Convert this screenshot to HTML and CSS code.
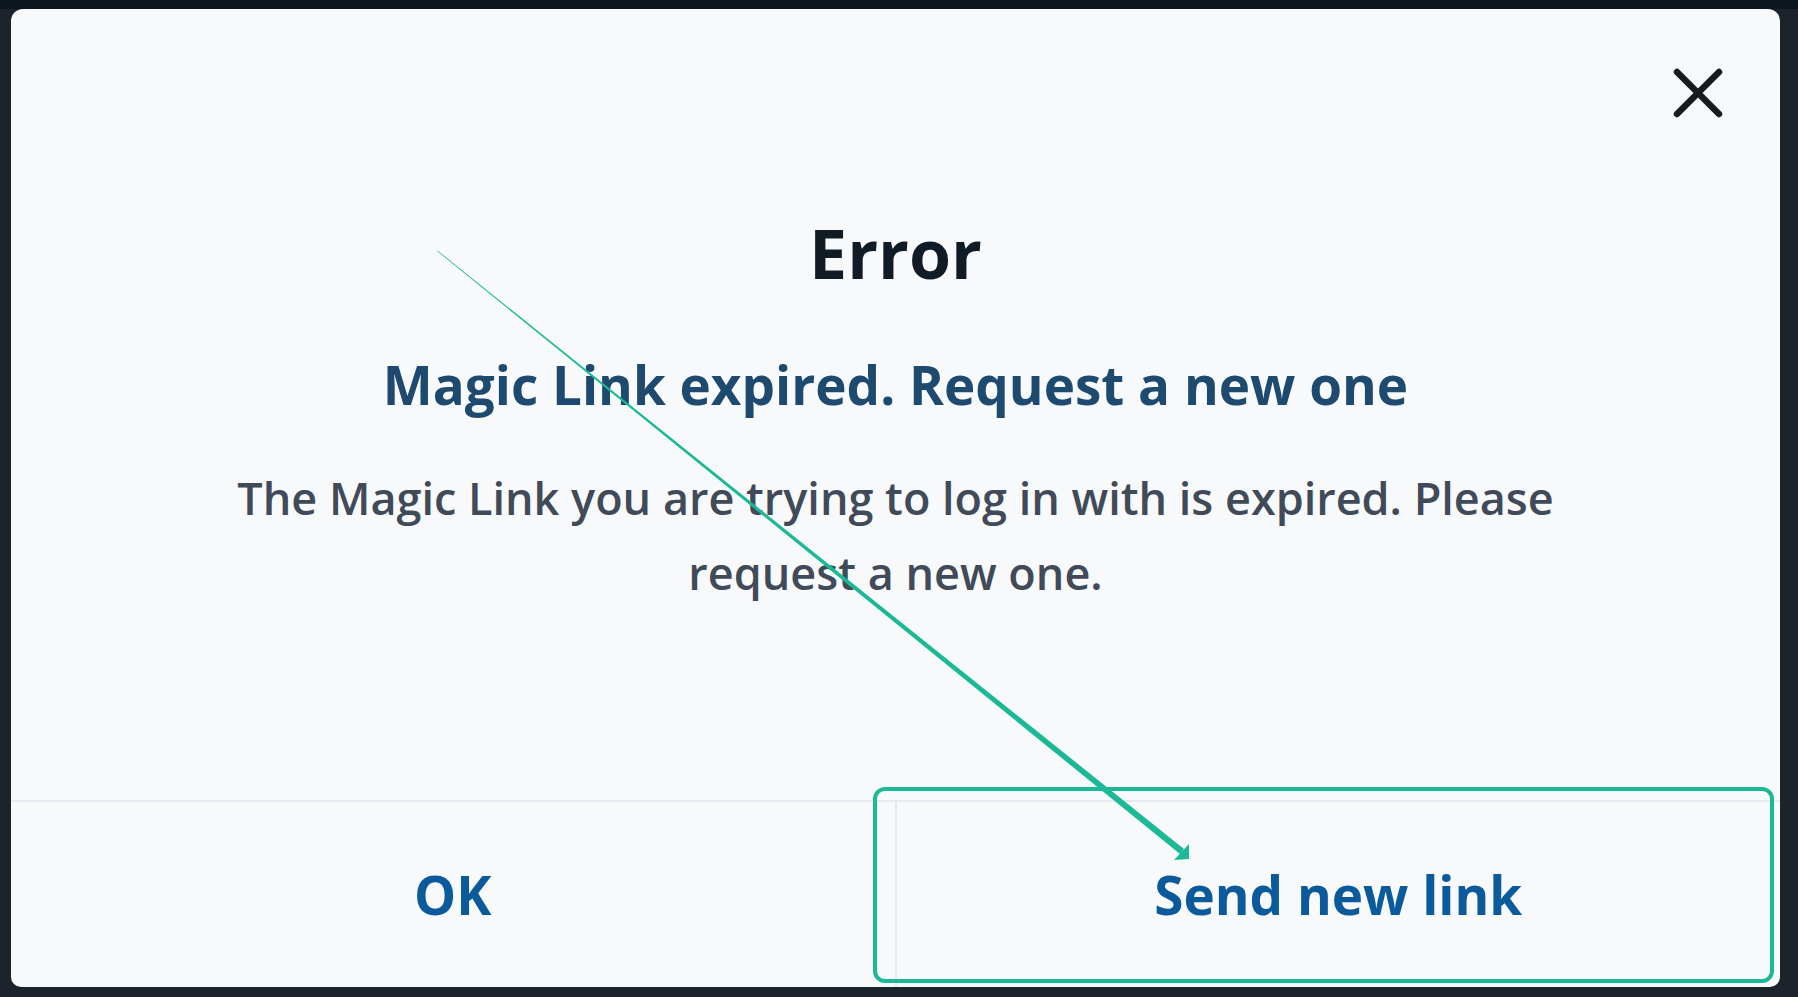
FILE: index.html
```html
<!DOCTYPE html>
<html lang="en">
<head>
<meta charset="utf-8">
<title>Error</title>
<link rel="stylesheet" href="styles.css">
</head>
<body>
<div class="screen">
  <div class="topbar"></div>
  <div class="stage">
    <div class="dialog">
      <div class="dialog-body">
        <div class="close-row">
          <button class="close" aria-label="Close">
            <svg width="50" height="50" viewBox="0 0 50 50"><path d="M4 4 L46 46 M46 4 L4 46" stroke="#161b20" stroke-width="6.5" stroke-linecap="round" fill="none"/></svg>
          </button>
        </div>
        <h1 class="title">Error</h1>
        <h2 class="subtitle">Magic Link expired. Request a new one</h2>
        <p class="message">The Magic Link you are trying to log in with is expired. Please request a new one.</p>
      </div>
      <div class="dialog-footer">
        <button class="action">OK</button>
        <button class="action action-right">Send new link</button>
      </div>
    </div>
  </div>
</div>
<svg class="annotation" width="1798" height="997" viewBox="0 0 1798 997">
  <rect x="875" y="789" width="897" height="192" rx="10" ry="10" fill="none" stroke="#1bb995" stroke-width="4"/>
  <polygon points="437.3,251.3 437.7,250.7 1184,849 1180,854" fill="#1bb995"/>
  <polygon points="1189,859 1174,860 1189,844" fill="#1bb995"/>
</svg>
</body>
</html>
```
FILE: styles.css
```css
* { box-sizing: border-box; }
html, body { margin: 0; padding: 0; }
body {
  width: 1798px;
  height: 997px;
  background: #1c232a;
  font-family: "Open Sans", "Noto Sans", sans-serif;
  overflow: hidden;
  position: relative;
}
.screen {
  display: flex;
  flex-direction: column;
  height: 997px;
}
.topbar {
  height: 9px;
  background: #0c161e;
  flex: none;
}
.stage {
  padding: 0 18px 10px 11px;
  flex: 1;
  display: flex;
}
.dialog {
  flex: 1;
  background: #f7f9fb;
  border-radius: 12px 12px 10px 10px;
  display: flex;
  flex-direction: column;
  overflow: hidden;
}
.dialog-body {
  flex: 1;
  display: flex;
  flex-direction: column;
  align-items: center;
  padding: 0 150px;
}
.close-row {
  align-self: stretch;
  display: flex;
  justify-content: flex-end;
  margin: 59px -93px 0 0;
  height: 50px;
}
.close {
  border: 0;
  background: none;
  padding: 0;
  width: 50px;
  height: 50px;
  cursor: pointer;
}
.close svg { display: block; }
.title {
  margin: 87px 0 0;
  font-size: 68px;
  line-height: 96px;
  font-weight: 700;
  color: #111b26;
}
.subtitle {
  margin: 46px 0 0;
  font-size: 53px;
  line-height: 76px;
  font-weight: 700;
  color: #1e4a6f;
}
.message {
  margin: 37px 0 0;
  max-width: 1420px;
  font-size: 45px;
  line-height: 75px;
  font-weight: 600;
  color: #404a58;
  text-align: center;
}
.dialog-footer {
  height: 187px;
  flex: none;
  display: flex;
  border-top: 2px solid #e7eaf0;
}
.action {
  flex: 1;
  border: 0;
  background: none;
  font-family: "Open Sans", "Noto Sans", sans-serif;
  font-size: 53px;
  font-weight: 700;
  color: #0b5a9b;
  padding: 0;
  cursor: pointer;
}
.action-right {
  border-left: 2px solid #e7eaf0;
}
.annotation {
  position: absolute;
  top: 0;
  left: 0;
  pointer-events: none;
}
```
